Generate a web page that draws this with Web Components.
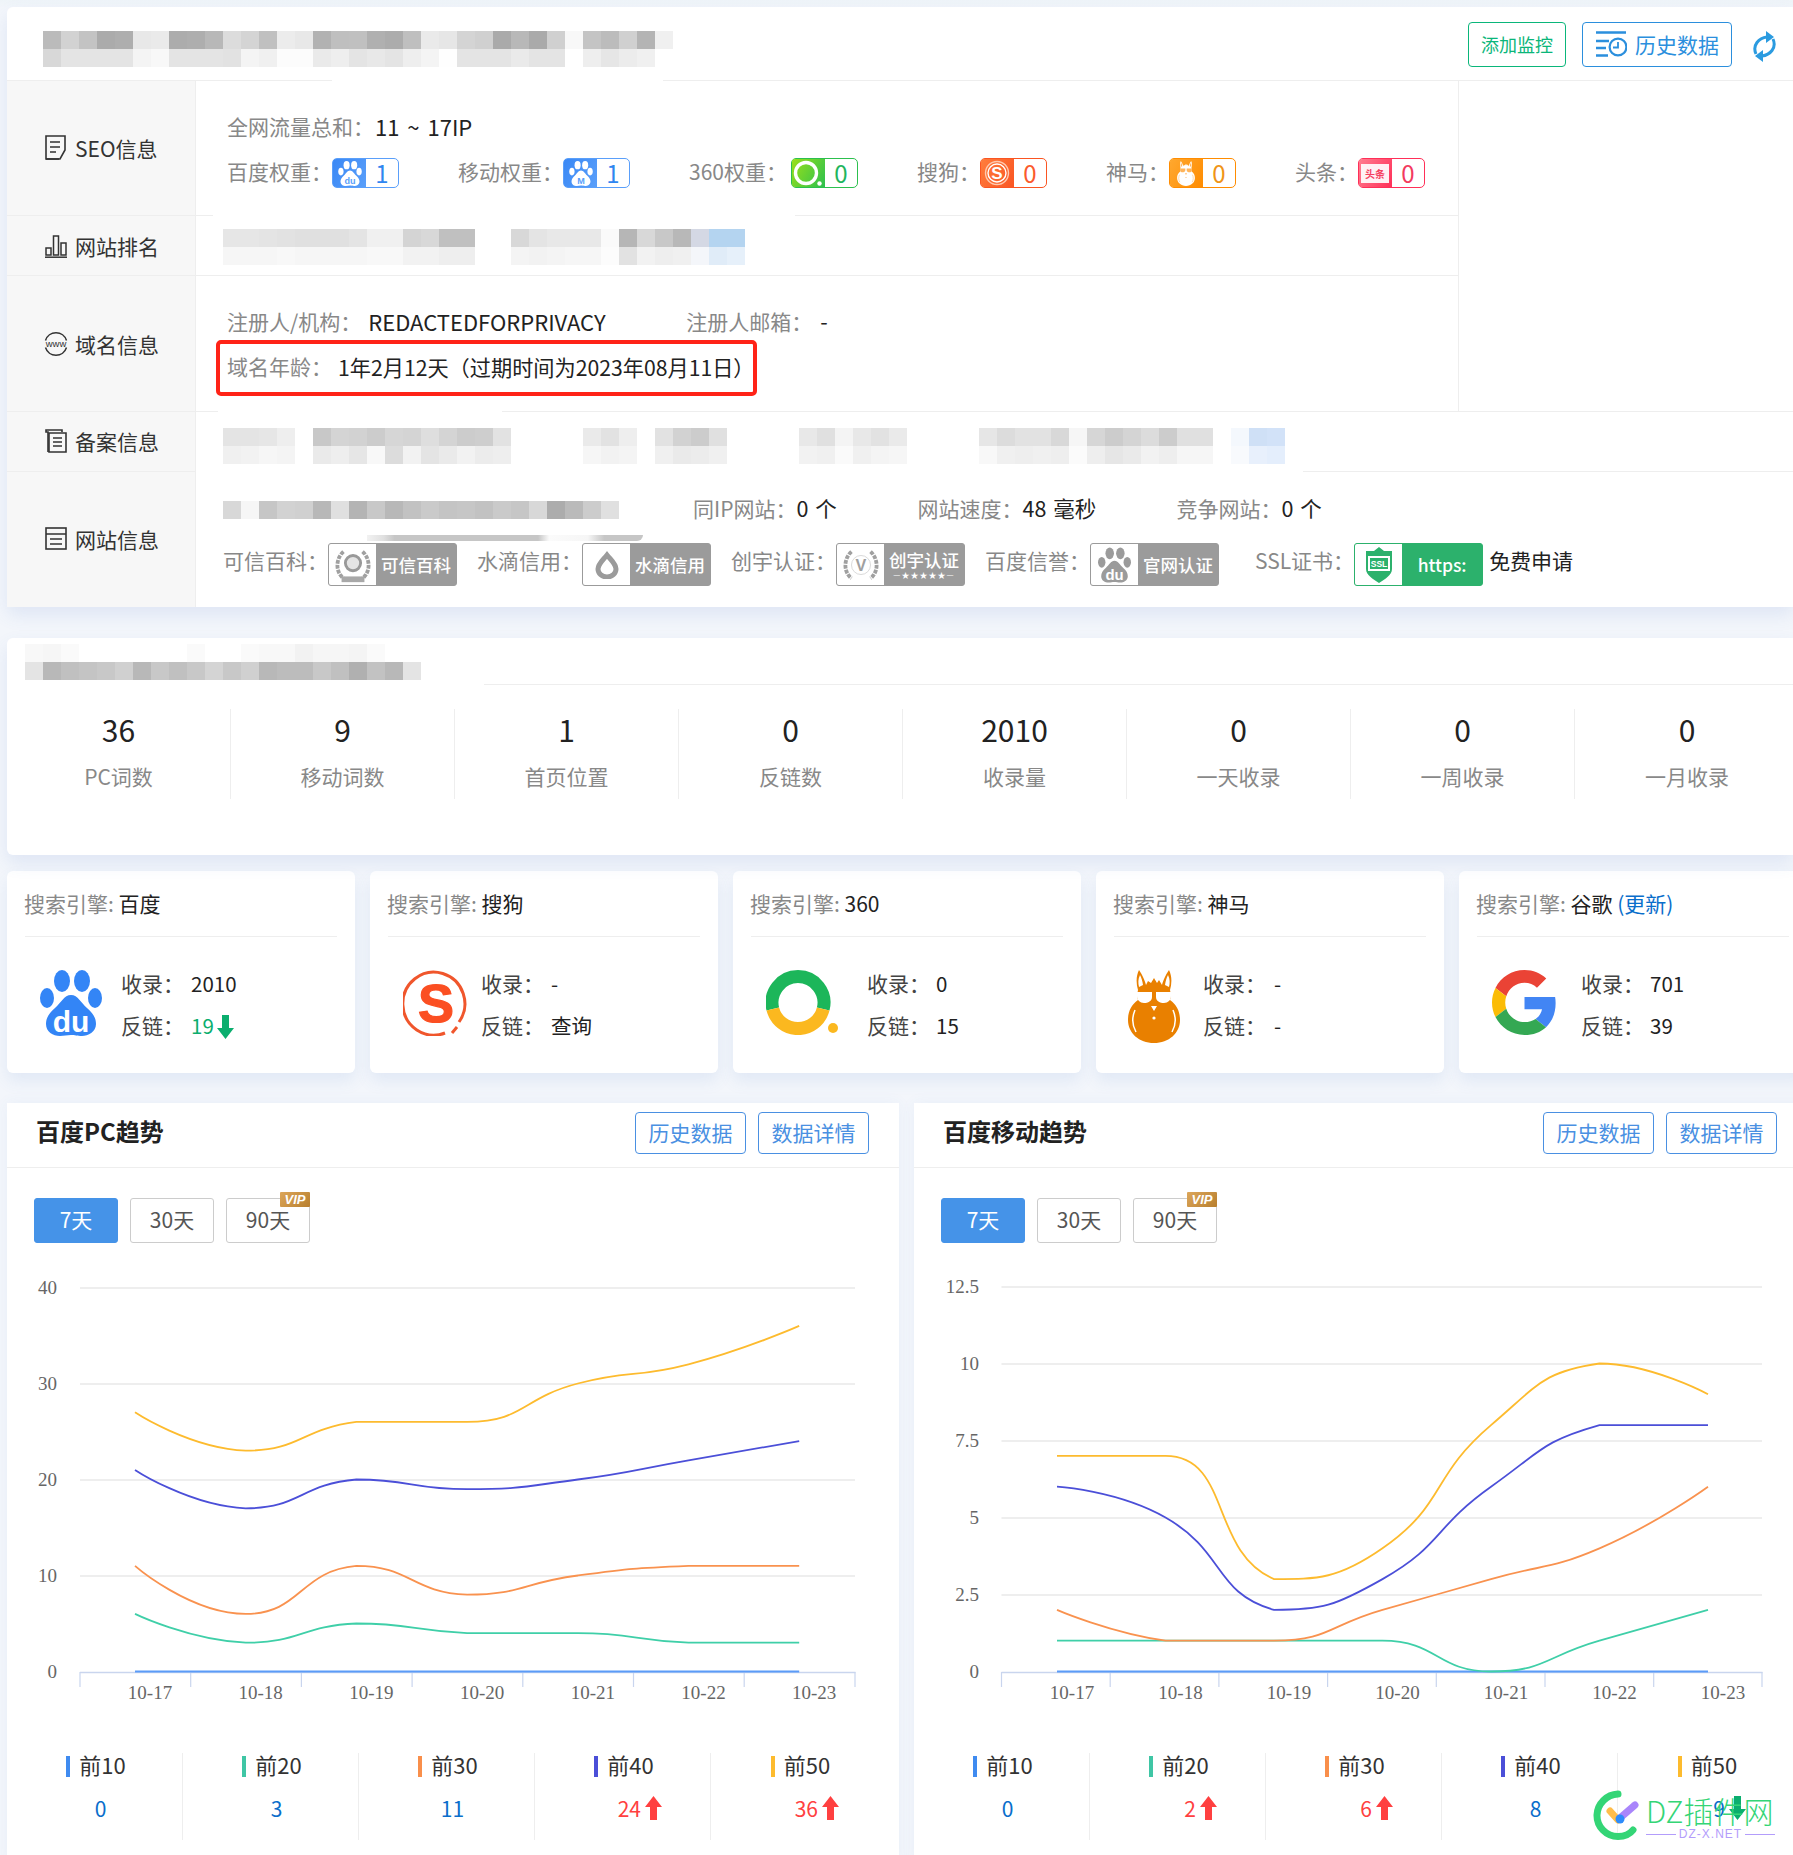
<!DOCTYPE html>
<html lang="zh">
<head>
<meta charset="utf-8">
<title>SEO</title>
<style>
  html, body { margin: 0; height: 1855px; overflow: hidden; }
  body {
    background: linear-gradient(#eef4f8 0, #f3f6fb 8px);
    font-family: "Noto Sans CJK SC", "Noto Sans", sans-serif;
    font-size: 21px;
    color: #222;
  }
  .page { width: 1793px; height: 1855px; padding: 7px 0 0 7px; box-sizing: border-box; overflow: hidden; position: relative; }
  .card { display: block; width: 1786px; background: #fff; border-radius: 6px 0 0 6px; box-shadow: 0 8px 18px rgba(70, 115, 200, .12); position: relative; }
  .card-head { display: flex; justify-content: space-between; align-items: flex-start; height: 74px; padding: 15px 16px 0 36px; box-sizing: border-box; border-bottom: 1px solid #eee; }
  .head-btns { display: flex; align-items: flex-start; gap: 16px; }
  .top-rows { width: 1451px; border-right: 1px solid #eee; border-bottom: 0; }
  .rows-line { border-bottom: 1px solid #eee; }
  .lbl { color: #888; }
  .line { display: flex; align-items: center; height: 30px; white-space: nowrap; }
  .line > .lbl, .line > .val { padding-bottom: 3px; }
  .domain-content .line > .lbl, .domain-content .line > .val, .site-content .line > .lbl, .site-content .line > .val { padding-bottom: 5px; }
  .val { color: #222; font-size: 21.5px; word-spacing: 2px; }
  .seo-content { display: flex; flex-direction: column; gap: 16px; padding: 31px 0 0 31px; }
  .seo-item { display: flex; align-items: center; margin-right: 59px; }
  .seo-item .lbl { padding-bottom: 4px; }
  .domain-content { display: flex; flex-direction: column; gap: 2px; padding: 32px 0 0 31px; }
  .red-box { display: flex; align-items: center; box-sizing: border-box; width: 541px; height: 56px; margin-left: -11px; padding: 0 0 4px 7px; border: 4px solid #ff2317; border-radius: 5px; white-space: nowrap; }
  .site-content { display: flex; flex-direction: column; gap: 18px; padding: 23px 0 0 27px; }
  .cert-line { display: flex; align-items: center; height: 43px; white-space: nowrap; }
  .cert-item { display: flex; align-items: center; margin-right: 20px; }
  .cert-item .lbl, .cert-line > .val { padding-bottom: 9px; }
  .gap { position: absolute; height: 2px; background: #fff; }
  .sliver { position: absolute; left: 360px; top: 528px; width: 276px; height: 6px; border-radius: 0 0 8px 0; background: linear-gradient(90deg, #f2f2f2 0, #e0e0e0 6%, #c6c6c6 10%, #c6c6c6 62%, #fbfbfb 66%, #f6f6f6 80%, #c6c6c6 86%, #c6c6c6 100%); }
  .stats { display: grid; grid-template-columns: repeat(8, 224px); padding: 24px 0 56px; overflow: hidden; }
  .card2-head { height: 47px; padding: 6px 0 0 18px; box-sizing: border-box; border-bottom: 1px solid #eee; }
  .engines { display: flex; gap: 15px; margin-top: 16px; width: 1830px; }
  .panels { display: flex; gap: 15px; margin-top: 30px; width: 1830px; height: 760px; }
  .rank-mosaic { padding: 13px 0 0 27px; }
  .beian-mosaic { padding: 16px 0 0 27px; }
</style>
</head>
<body>
<div class="page">
  <div class="card">
    <div class="card-head">
      <x-mosaic style="margin-top:9px" rows="bb d2 c3 ab ae e8 ea ac ae b8 dc d4 c0 ec e8 b2 bf c0 b0 ac bf ea e6 d4 d0 aa b8 aa d0 f8 c4 bc d0 b4 f0/d8 e4 e4 e4 e4 f4 f8 e4 e4 e4 e2 f4 f0 fc fc ea ee e4 e8 e4 ee f4 fe e4 e4 e4 ea e4 e4 -- ee e6 ec f0 --"></x-mosaic>
      <div class="head-btns">
        <head-button color="#0ab67a" w="98">添加监控</head-button>
        <head-button color="#2b8fdd" w="150" icon="history">历史数据</head-button>
        <app-icon name="refresh" style="margin:9px 0 0 4px"></app-icon>
      </div>
    </div>
    <div class="top-rows">
      <info-row label="SEO信息" icon="doc" h="135">
        <div class="seo-content">
          <div class="line"><span class="lbl">全网流量总和：</span><span class="val" style="margin-left:1px;font-size:22px;word-spacing:3px">11 ~ 17IP</span></div>
          <div class="line">
            <div class="seo-item"><span class="lbl">百度权重：</span><rank-badge value="1" grad="#3a88f5,#5a9ffa" num="#2f86f0" icon="pawDu"></rank-badge></div>
            <div class="seo-item"><span class="lbl">移动权重：</span><rank-badge value="1" grad="#3a88f5,#5a9ffa" num="#2f86f0" icon="pawM"></rank-badge></div>
            <div class="seo-item"><span class="lbl" style="margin-right:4px">360权重：</span><rank-badge value="0" grad="#9be01a,#2cc04e" num="#1fb55e" icon="s360"></rank-badge></div>
            <div class="seo-item"><span class="lbl">搜狗：</span><rank-badge value="0" grad="#ff7d3c,#fa5522" num="#fb5a2c" icon="sSogou"></rank-badge></div>
            <div class="seo-item"><span class="lbl">神马：</span><rank-badge value="0" grad="#ffa82f,#ff8c00" num="#f09416" icon="sShenma"></rank-badge></div>
            <div class="seo-item"><span class="lbl">头条：</span><rank-badge value="0" grad="#ff7f90,#ff2f58" num="#f33a5f" icon="sTou"></rank-badge></div>
          </div>
        </div>
      </info-row>
      <info-row label="网站排名" icon="bars" h="60">
        <div class="rank-mosaic">
          <x-mosaic rows="e6 e6 e4 e2 e0 e0 e0 e4 f0 f0 d4 d8 c0 c0 -- -- d8 e4 e8 e8 e8 fa b6 d8 c8 b8 d4d8e4 b4d4f0 b4d4f0/f6 f6 f6 f8 f6 f6 f6 f6 f8 f8 f2 f2 ee ee -- -- f4 f2 f4 f6 f6 fc e2 f2 ee f0 f4f6fa e0ecf8 e6f0fa"></x-mosaic>
        </div>
      </info-row>
      <info-row label="域名信息" icon="www" h="135" noline>
        <div class="domain-content">
          <div class="line">
            <span class="lbl">注册人/机构：</span><span class="val" style="margin-left:7px;width:318px;font-size:22px">REDACTEDFORPRIVACY</span>
            <span class="lbl">注册人邮箱：</span><span class="val" style="margin-left:8px">-</span>
          </div>
          <div class="red-box"><span class="lbl">域名年龄：</span><span class="val" style="margin-left:6px;font-size:21.2px">1年2月12天（过期时间为2023年08月11日）</span></div>
        </div>
      </info-row>
    </div>
    <div class="rows-line"></div>
    <info-row label="备案信息" icon="files" h="60" style="--side-pb:2px">
      <div class="beian-mosaic">
        <x-mosaic rows="e4 e4 e6 ee -- c8 d4 d2 cc d6 d4 de d4 cc ce e2 -- -- -- -- ea e2 ee -- e2 d2 cc e0 -- -- -- -- e8 e0 f4 e8 e2 ea -- -- -- -- e6 dc e2 e2 d8 f6 d6 cc d4 dc cc e0 e0 -- f4f8fd cfe0f6 d2e2f8/f0 f2 f6 f4 -- ea ee e6 f8 dc f2 e4 ea f2 ec ee -- -- -- -- f6 f2 f4 -- f0 ea ec f0 -- -- -- -- f2 f0 fa f0 f4 f6 -- -- -- -- f8 f0 ee f0 ee fb ee e6 ea f2 ee f6 f6 -- f8fafd e8f0fc e4eefc"></x-mosaic>
      </div>
    </info-row>
    <info-row label="网站信息" icon="sheet" h="135" noline style="--side-pb:2px">
      <div class="site-content">
        <div class="line">
          <x-mosaic rows="d8 f6 c6 d2 d0 b8 e0 b4 c8 b8 c2 ca c4 c6 c2 ca c6 d8 ac ba cc e0"></x-mosaic>
          <span class="lbl" style="margin-left:74px">同IP网站：</span><span class="val" style="width:121px">0 个</span>
          <span class="lbl">网站速度：</span><span class="val" style="width:154px">48 毫秒</span>
          <span class="lbl">竞争网站：</span><span class="val">0 个</span>
        </div>
        <div class="cert-line">
          <div class="cert-item"><span class="lbl">可信百科：</span><cert-badge icon="wreath">可信百科</cert-badge></div>
          <div class="cert-item"><span class="lbl">水滴信用：</span><cert-badge icon="drop">水滴信用</cert-badge></div>
          <div class="cert-item"><span class="lbl">创宇认证：</span><cert-badge icon="wreathV" stars>创宇认证</cert-badge></div>
          <div class="cert-item" style="margin-right:36px"><span class="lbl">百度信誉：</span><cert-badge icon="pawGrey">官网认证</cert-badge></div>
          <div class="cert-item" style="margin-right:0"><span class="lbl">SSL证书：</span><cert-badge icon="shield" green>https:</cert-badge></div>
          <span class="val" style="margin-left:6px;font-size:21px">免费申请</span>
        </div>
      </div>
    </info-row>
    <span class="gap" style="left:325px;top:73px;width:331px"></span>
    <span class="gap" style="left:206px;top:208px;width:582px"></span>
    <span class="gap" style="left:211px;top:403px;width:284px"></span>
    <span class="gap" style="left:189px;top:463px;width:1107px"></span>
    <span class="sliver"></span>
  </div>

  <div class="card" style="margin-top:31px">
    <div class="card2-head">
      <x-mosaic rows="f8 f6 fa -- -- -- -- -- -- fa -- -- fa f8 f8 f2 f6 f6 f4 fa -- --/e4 b8 c0 c4 c8 d0 b8 c8 c0 c8 d4 c8 d0 b8 bc bc c8 c0 b0 c2 b8 e4"></x-mosaic>
    </div>
    <span class="gap" style="left:0;top:46px;width:477px"></span>
    <div class="stats">
      <stat-item value="36" label="PC词数"></stat-item>
      <stat-item value="9" label="移动词数"></stat-item>
      <stat-item value="1" label="首页位置"></stat-item>
      <stat-item value="0" label="反链数"></stat-item>
      <stat-item value="2010" label="收录量"></stat-item>
      <stat-item value="0" label="一天收录"></stat-item>
      <stat-item value="0" label="一周收录"></stat-item>
      <stat-item value="0" label="一月收录"></stat-item>
    </div>
  </div>

  <div class="engines">
    <engine-card name="百度" icon="baidu" ix="33" tx="114" vx="184" included="2010" links="19" trend="down"></engine-card>
    <engine-card name="搜狗" icon="sogou" ix="33" tx="111" vx="181" included="-" links="查询"></engine-card>
    <engine-card name="360" icon="q360" ix="33" tx="134" vx="203" included="0" links="15"></engine-card>
    <engine-card name="神马" icon="shenma" ix="32" tx="107" vx="178" included="-" links="-"></engine-card>
    <engine-card name="谷歌" icon="google" ix="33" tx="122" vx="191" included="701" links="39" more="(更新)"></engine-card>
  </div>

  <div class="panels">
    <trend-panel heading="百度PC趋势" tick0="73" tickstep="110.7" pt0="128" ptstep="110.7" unit="9.6" ystep="96" ylabels="40,30,20,10" ylabelx="50" legend="0,3,11,24u,36u"
      series="0,0,0,0,0,0,0|6,3,5,4,4,3,3|11,6,11,8,10,11,11|21,17,20,19,20,22,24|27,23,26,26,30,32,36"></trend-panel>
    <trend-panel style="width:893px" heading="百度移动趋势" tick0="87.5" tickstep="108.7" pt0="143" ptstep="108.5" unit="30.8" ystep="77" ylabels="12.5,10,7.5,5,2.5" ylabelx="65" legend="0,2u,6u,8,9d"
      series="0,0,0,0,0,0,0|1,1,1,1,0,1,2|2,1,1,2,3,4,6|6,5,2,3,6,8,8|7,7,3,4,8,10,9"></trend-panel>
  </div>

  <dz-watermark></dz-watermark>
</div>

<script>
const paw = (fill, txt, txtFill, size) => `
  <ellipse cx="22" cy="11" rx="8" ry="11" fill="${fill}"/><ellipse cx="42" cy="11" rx="8" ry="11" fill="${fill}"/>
  <ellipse cx="7" cy="28" rx="7" ry="10" fill="${fill}"/><ellipse cx="55" cy="28" rx="7" ry="10" fill="${fill}"/>
  <path fill="${fill}" d="M31 25C38 25 41 33 47 38C53 43 56 48 56 54C56 62 48 66 42 66C37 66 35 65 31 65C27 65 24 66 20 66C13 66 6 62 6 54C6 48 9 43 15 38C21 33 24 25 31 25Z"/>
  <text x="31" y="${size > 24 ? 62 : 60}" text-anchor="middle" font-family="Liberation Sans" font-weight="700" font-size="${size}" fill="${txtFill}">${txt}</text>`;

const llama = (fill, eye) => `
  <path fill="${fill}" d="M11 0C8 6 8 13 10 20C9 24 9 27 10 30C3 35 0 42 0 50C0 63 11 73 26 73C41 73 52 63 52 50C52 42 49 35 42 30C43 27 43 24 42 20C44 13 44 6 41 0C38 4 35 11 34 15L31 10L29 13L26 8L23 13L20 11L18 15C17 11 14 4 11 0Z"/>
  <path fill="${eye}" d="M12 5C10 9 10 13 11 17L15 15C14.5 11 13.5 8 12 5ZM40 5C42 9 42 13 41 17L37 15C37.5 11 38.5 8 40 5Z"/>
  <path fill="${eye}" d="M9 22H24V27C24 31 20 33 16 33C12 33 9 30 9 26ZM28 22H43V26C43 30 40 33 36 33C32 33 28 31 28 27Z"/>
  <path fill="none" stroke="${eye}" stroke-width="1.5" d="M7 40C4 47 4 55 8 62M45 40C48 47 48 55 44 62"/>
  <circle cx="26" cy="48" r="1.6" fill="${eye}"/><path fill="${eye}" d="M23 36H29L26 41Z"/>`;

const wreath = (inner) => `
  <g fill="none" stroke="#a0a0a0" stroke-width="4" stroke-dasharray="4 1.2">
    <path d="M10 7C2 14 1 28 10 35"/><path d="M30 7C38 14 39 28 30 35"/>
  </g>
  ${inner}`;

const ICONS = {
  doc: `<svg width="21" height="26" viewBox="0 0 21 26" fill="none" stroke="#333" stroke-width="1.6"><path d="M1 1H20V15L15 24H1Z"/><path d="M5 7H15M5 12H15M5 17H11"/><path d="M1 24H14"/></svg>`,
  bars: `<svg width="22" height="24" viewBox="0 0 22 24" fill="none" stroke="#333" stroke-width="1.5"><path d="M1 14H6V21H1ZM8.5 2H13.5V21H8.5ZM16 9H21V21H16Z"/><path d="M0 23.2H22"/></svg>`,
  www: `<svg width="24" height="24" viewBox="0 0 24 24"><path fill="none" stroke="#333" stroke-width="1.5" d="M1.5 8.5A11 11 0 0 1 22.5 8.5M1.5 15.5A11 11 0 0 0 22.5 15.5"/><text x="12" y="15" text-anchor="middle" font-family="Liberation Sans" font-size="9.5" fill="#333">www</text></svg>`,
  files: `<svg width="22" height="24" viewBox="0 0 22 24" fill="none" stroke="#333" stroke-width="1.6"><path d="M3 23V3H1V1H17V3"/><path d="M4 4H21V23H4Z"/><path d="M8 9H17M8 13H17M8 17H17"/></svg>`,
  sheet: `<svg width="22" height="23" viewBox="0 0 22 23" fill="none" stroke="#333" stroke-width="1.6"><rect x="1" y="1" width="20" height="21"/><path d="M1 7H21M5 12H17M5 17H17"/></svg>`,
  refresh: `<svg width="25" height="31" viewBox="0 0 25 31" fill="none" stroke="#2b9be0" stroke-width="3"><path d="M15 6C7 7 0 14 4 23"/><path d="M10 25C18 24 25 17 21 8"/><path fill="#2b9be0" stroke="none" d="M14 0L22 6L14 12ZM11 19L3 25L11 31Z"/></svg>`,
  history: `<svg width="32" height="26" viewBox="0 0 32 26" fill="none" stroke="#2b8fdd"><path stroke-width="2.6" d="M1 1.5H31M1 10H14M1 17H11M1 24.5H13"/><circle cx="23" cy="16" r="8.4" stroke-width="2.2"/><path stroke-width="1.8" d="M23 11V16.5H18"/></svg>`,
  pawDu: `<svg width="24" height="25" viewBox="0 0 62 66">${paw('#fff', 'du', '#5a9ffa', 24)}</svg>`,
  pawM: `<svg width="24" height="25" viewBox="0 0 62 66">${paw('#fff', 'M', '#5a9ffa', 24)}</svg>`,
  s360: `<svg width="30" height="27" viewBox="0 0 30 27"><circle cx="13" cy="13" r="10.5" fill="none" stroke="#fff" stroke-width="3.4"/><circle cx="26.5" cy="23.5" r="2.2" fill="#fff"/></svg>`,
  sSogou: `<svg width="26" height="26" viewBox="0 0 26 26"><circle cx="13" cy="13" r="11.5" fill="none" stroke="#ffc9ae" stroke-width="1.4"/><circle cx="13" cy="13" r="9" fill="none" stroke="#fff" stroke-width="1.4"/><text x="13" y="19" text-anchor="middle" font-family="Liberation Sans" font-weight="700" font-size="17" fill="#fff">S</text></svg>`,
  sShenma: `<svg width="18" height="25" viewBox="0 0 52 73">${llama('#fff', '#ffb45a')}</svg>`,
  sTou: `<svg width="28" height="19" viewBox="0 0 28 19"><rect width="28" height="19" fill="#fff" opacity=".92"/><text x="14" y="14" text-anchor="middle" font-family="Noto Sans CJK SC" font-weight="700" font-size="10" fill="#f5405f">头条</text></svg>`,
  baidu: `<svg width="62" height="66" viewBox="0 0 62 66">${paw('#3385f6', 'du', '#fff', 30)}</svg>`,
  sogou: `<svg width="65" height="66" viewBox="0 0 65 66"><path fill="none" stroke="#f0562c" stroke-width="3" d="M56 52A31 31.5 0 1 0 42 63"/><path fill="none" stroke="#f0562c" stroke-width="3" d="M49 63L54 57"/><text x="33" y="52" text-anchor="middle" font-family="Liberation Sans" font-weight="700" font-size="54" fill="#fb4f22" stroke="#fb4f22" stroke-width="1.2">S</text></svg>`,
  q360: `<svg width="73" height="65" viewBox="0 0 73 65" fill="none" stroke-width="13"><path stroke="#1cb65a" d="M6.8 39A26 26 0 1 1 57.2 39"/><path stroke="#fbb81f" d="M57.2 39A26 26 0 0 1 6.8 39"/><circle cx="67" cy="58" r="5" fill="#fbb81f" stroke="none"/></svg>`,
  shenma: `<svg width="52" height="73" viewBox="0 0 52 73">${llama('#e98000', '#fff')}</svg>`,
  google: `<svg width="65" height="65" viewBox="0 0 48 48"><path fill="#EA4335" d="M24 9.5c3.54 0 6.71 1.22 9.21 3.6l6.85-6.85C35.9 2.38 30.47 0 24 0 14.62 0 6.51 5.38 2.56 13.22l7.98 6.19C12.43 13.72 17.74 9.5 24 9.5z"/><path fill="#4285F4" d="M46.98 24.55c0-1.57-.15-3.09-.38-4.55H24v9.02h12.94c-.58 2.96-2.26 5.48-4.78 7.18l7.73 6c4.51-4.18 7.09-10.36 7.09-17.65z"/><path fill="#FBBC05" d="M10.53 28.59c-.48-1.45-.76-2.99-.76-4.59s.27-3.14.76-4.59l-7.98-6.19C.92 16.46 0 20.12 0 24c0 3.88.92 7.54 2.56 10.78l7.97-6.19z"/><path fill="#34A853" d="M24 48c6.48 0 11.93-2.13 15.89-5.81l-7.73-6c-2.15 1.45-4.92 2.3-8.16 2.3-6.26 0-11.57-4.22-13.47-9.91l-7.98 6.19C6.51 42.62 14.62 48 24 48z"/></svg>`,
  wreath: `<svg width="40" height="40" viewBox="0 0 40 42">${wreath(`<circle cx="20" cy="19" r="8" fill="#e4e4e4" stroke="#999" stroke-width="3"/><rect x="8" y="33" width="24" height="6" fill="#a8a8a8"/>`)}</svg>`,
  wreathV: `<svg width="40" height="40" viewBox="0 0 40 42">${wreath(`<circle cx="20" cy="21" r="10" fill="none" stroke="#d8d8d8" stroke-width="1"/><text x="20" y="27" text-anchor="middle" font-family="Liberation Sans" font-weight="700" font-size="17" fill="#a0a0a0">V</text>`)}</svg>`,
  drop: `<svg width="24" height="28" viewBox="0 0 24 28"><path fill="none" stroke="#9b9b9b" stroke-width="5" d="M12 4C8 9 3 13 3 18A9 8 0 0 0 21 18C21 13 16 9 12 4Z"/></svg>`,
  pawGrey: `<svg width="33" height="36" viewBox="0 0 62 66">${paw('#9b9b9b', 'du', '#fff', 28)}</svg>`,
  shield: `<svg width="32" height="36" viewBox="0 0 32 36"><path fill="#2cb16c" d="M16 0L21 4H29V22C29 28 22 32 16 36C10 32 3 28 3 22V4H11Z"/><rect x="5" y="9" width="22" height="15" fill="#fff"/><rect x="7" y="11" width="18" height="11" fill="#2cb16c"/><text x="16" y="20" text-anchor="middle" font-family="Liberation Sans Narrow,Liberation Sans" font-weight="700" font-size="8.5" fill="#fff">SSL</text></svg>`,
  arrowUp: `<svg width="17" height="24" viewBox="0 0 17 24"><path fill="#ff4040" d="M8.5 0L17 11H12V24H5V11H0Z"/></svg>`,
  arrowDown: `<svg width="17" height="24" viewBox="0 0 17 24"><path fill="#0bae6e" d="M8.5 24L17 13H12V0H5V13H0Z"/></svg>`
};

class AppIcon extends HTMLElement {
  connectedCallback() {
    if (this.shadowRoot) return;
    const root = this.attachShadow({mode: "open"});
    root.innerHTML = `<style>:host{display:inline-flex;flex:none;line-height:0}</style>${ICONS[this.getAttribute("name")]}`;
  }
}

class XMosaic extends HTMLElement {
  connectedCallback() {
    if (this.shadowRoot) return;
    const root = this.attachShadow({mode: "open"});
    const rows = this.getAttribute("rows").split("/").map(r => r.trim().split(/\s+/));
    const cell = c => {
      if (c === "--") return "<i></i>";
      const col = c.length === 2 ? "#" + c + c + c : "#" + c;
      return `<i style="background:${col}"></i>`;
    };
    root.innerHTML = `
      <style>
        :host { display: block; width: fit-content; flex: none; }
        .r { display: flex; height: 18px; }
        i { display: block; width: 18px; height: 18px; }
      </style>
      ${rows.map(r => `<div class="r">${r.map(cell).join("")}</div>`).join("")}`;
  }
}

class HeadButton extends HTMLElement {
  connectedCallback() {
    if (this.shadowRoot) return;
    const root = this.attachShadow({mode: "open"});
    const color = this.getAttribute("color");
    const icon = this.getAttribute("icon");
    root.innerHTML = `
      <style>
        :host { display: flex; align-items: center; justify-content: center; gap: 8px; box-sizing: border-box; height: 45px; width: ${this.getAttribute("w")}px; padding-bottom: 2px; border: 1.5px solid ${color}; border-radius: 4px; color: ${color}; font-size: ${icon ? 21 : 18}px; }
      </style>
      ${icon ? `<app-icon name="${icon}"></app-icon>` : ""}<slot></slot>`;
  }
}

class InfoRow extends HTMLElement {
  connectedCallback() {
    if (this.shadowRoot) return;
    const root = this.attachShadow({mode: "open"});
    root.innerHTML = `
      <style>
        :host { display: flex; box-sizing: border-box; height: ${this.getAttribute("h")}px; ${this.hasAttribute("noline") ? "" : "border-bottom: 1px solid #eee;"} }
        .side { display: flex; align-items: center; gap: 9px; box-sizing: border-box; flex: none; width: 189px; padding: 0 0 var(--side-pb, 0) 38px; background: #f7f7f7; border-right: 1px solid #eee; color: #333; font-size: 21px; }
        .body { flex: 1; min-width: 0; }
        .ic { display: flex; width: 21px; justify-content: center; }
      </style>
      <div class="side"><span class="ic"><app-icon name="${this.getAttribute("icon")}"></app-icon></span>${this.getAttribute("label")}</div>
      <div class="body"><slot></slot></div>`;
  }
}

class RankBadge extends HTMLElement {
  connectedCallback() {
    if (this.shadowRoot) return;
    const root = this.attachShadow({mode: "open"});
    const [a, b] = this.getAttribute("grad").split(",");
    const num = this.getAttribute("num");
    root.innerHTML = `
      <style>
        :host { display: flex; box-sizing: border-box; width: 67px; height: 30px; border: 1.5px solid ${b}; border-radius: 5px; flex: none; }
        .ic { display: flex; align-items: center; justify-content: center; width: 33px; border-radius: 3px 0 0 3px; background: linear-gradient(120deg, ${a}, ${b}); }
        .n { flex: 1; display: flex; align-items: center; justify-content: center; color: ${num}; font-size: 24px; line-height: 26px; }
      </style>
      <div class="ic"><app-icon name="${this.getAttribute("icon")}"></app-icon></div>
      <div class="n">${this.getAttribute("value")}</div>`;
  }
}

class CertBadge extends HTMLElement {
  connectedCallback() {
    if (this.shadowRoot) return;
    const root = this.attachShadow({mode: "open"});
    const col = this.hasAttribute("green") ? "#2cb16c" : "#9b9b9b";
    const stars = this.hasAttribute("stars");
    root.innerHTML = `
      <style>
        :host { display: flex; box-sizing: border-box; width: 129px; height: 43px; border: 1.5px solid ${col}; border-radius: 3px; overflow: hidden; flex: none; background: ${col}; }
        .ic { display: flex; align-items: center; justify-content: center; width: 47px; background: #fff; flex: none; }
        .t { flex: 1; display: flex; flex-direction: column; align-items: center; justify-content: center; color: #fff; font-size: 17.5px; font-weight: 500; line-height: 20px; }
        .s { font-size: 8px; line-height: 10px; letter-spacing: 1px; font-weight: 400; }
      </style>
      <div class="ic"><app-icon name="${this.getAttribute("icon")}"></app-icon></div>
      <div class="t"><slot></slot>${stars ? `<span class="s">—★★★★★—</span>` : ""}</div>`;
  }
}

class StatItem extends HTMLElement {
  connectedCallback() {
    if (this.shadowRoot) return;
    const root = this.attachShadow({mode: "open"});
    root.innerHTML = `
      <style>
        :host { display: flex; flex-direction: column; align-items: center; height: 90px; border-right: 1px solid #eee; }
        :host(:last-child) { border-right: 0; }
        .v { font-size: 30px; line-height: 40px; color: #222; }
        .l { font-size: 21px; line-height: 44px; margin-top: 5px; color: #888; }
      </style>
      <div class="v">${this.getAttribute("value")}</div>
      <div class="l">${this.getAttribute("label")}</div>`;
  }
}

class EngineCard extends HTMLElement {
  connectedCallback() {
    if (this.shadowRoot) return;
    const root = this.attachShadow({mode: "open"});
    const ix = +this.getAttribute("ix"), tx = +this.getAttribute("tx"), vx = +this.getAttribute("vx");
    const more = this.getAttribute("more");
    const trend = this.getAttribute("trend");
    root.innerHTML = `
      <style>
        :host { display: block; box-sizing: border-box; flex: none; width: 348px; height: 202px; padding: 19px 18px 0; background: #fff; border-radius: 6px; box-shadow: 0 8px 16px rgba(70, 115, 200, .1); }
        .title { line-height: 26px; padding-bottom: 20px; border-bottom: 1px solid #eee; color: #222; white-space: nowrap; font-size: 21px; }
        .title b { font-weight: 400; color: #888; margin-left: -1px; }
        .title a { color: #0a6ecb; }
        .body { display: flex; padding: 33px 0 0 ${ix - 18}px; }
        .ic { flex: none; width: ${tx - ix}px; }
        .rows { display: flex; flex-direction: column; gap: 12px; }
        .row { display: flex; align-items: center; height: 30px; color: #222; font-size: 20.5px; }
        .row span { padding-bottom: 4px; }
        .k { width: ${vx - tx}px; color: #444; font-size: 21px; }
        .green { color: #0bae6e; }
      </style>
      <div class="title"><b>搜索引擎:</b> ${this.getAttribute("name")}${more ? ` <a>${more}</a>` : ""}</div>
      <div class="body">
        <div class="ic"><app-icon name="${this.getAttribute("icon")}"></app-icon></div>
        <div class="rows">
          <div class="row"><span class="k">收录：</span><span>${this.getAttribute("included")}</span></div>
          <div class="row"><span class="k">反链：</span><span class="${trend ? "green" : ""}">${this.getAttribute("links")}</span>${trend ? `<app-icon name="arrowDown" style="margin-left:3px"></app-icon>` : ""}</div>
        </div>
      </div>`;
  }
}

class TrendChart extends HTMLElement {
  // same control points as a smoothed echarts line
  static smooth(pts) {
    const s = 0.5;
    const clamp = (v, a, b) => Math.max(Math.min(a, b), Math.min(Math.max(a, b), v));
    let d = `M${pts[0][0]} ${pts[0][1]}`;
    let cp0 = pts[0];
    for (let i = 0; i < pts.length - 1; i++) {
      const [x, y] = pts[i], [nx, ny] = pts[i + 1];
      const nn = pts[i + 2] || pts[i + 1];
      let cp1;
      if (i + 2 < pts.length) {
        const lenA = Math.hypot(nx - x, ny - y), lenB = Math.hypot(nn[0] - nx, nn[1] - ny);
        const r = lenA / (lenA + lenB);
        const vx = (nn[0] - x) * s, vy = (nn[1] - y) * s;
        cp1 = [clamp(nx - vx * r, x, nx), clamp(ny - vy * r, y, ny)];
        const ax = nx - cp1[0], ay = ny - cp1[1];
        d += `C${cp0[0]} ${cp0[1]} ${cp1[0]} ${cp1[1]} ${nx} ${ny}`;
        const k = lenB / lenA;
        cp0 = [clamp(nx + ax * k, nx, nn[0]), clamp(ny + ay * k, ny, nn[1])];
      } else {
        d += `C${cp0[0]} ${cp0[1]} ${nx} ${ny} ${nx} ${ny}`;
      }
    }
    return d;
  }
  connectedCallback() {
    if (this.shadowRoot) return;
    const root = this.attachShadow({mode: "open"});
    const base = 421;
    const a = n => +this.getAttribute(n);
    const unit = a("unit"), tick0 = a("tick0"), tickstep = a("tickstep"), pt0 = a("pt0"), ptstep = a("ptstep"), lx = a("ylabelx"), ystep = a("ystep");
    const colors = ["#5b9bf8", "#3fcfa8", "#f9924f", "#4b4fd8", "#fdbb2e"];
    const series = this.getAttribute("series").split("|").map(s => s.split(",").map(Number));
    const ylabels = this.getAttribute("ylabels").split(",");
    const days = ["10-17", "10-18", "10-19", "10-20", "10-21", "10-22", "10-23"];
    let out = "";
    ylabels.forEach((l, i) => {
      const y = base - (ylabels.length - i) * ystep;
      out += `<path d="M${tick0} ${y}H848" stroke="#e8e8e8" stroke-width="1.5"/><text x="${lx}" y="${y + 6}" text-anchor="end">${l}</text>`;
    });
    out += `<text x="${lx}" y="${base + 6}" text-anchor="end">0</text>`;
    out += `<path d="M${tick0} ${base + .5}H848.5" stroke="#c9d5ee" stroke-width="1.5" fill="none"/>`;
    for (let i = 0; i < 8; i++) {
      const x = i === 7 ? 848 : tick0 + i * tickstep;
      out += `<path d="M${x} ${base}V${base + 15}" stroke="#c9d5ee" stroke-width="1.2"/>`;
    }
    days.forEach((d, i) => {
      out += `<text x="${pt0 + i * ptstep + 15}" y="${base + 27}" text-anchor="middle">${d}</text>`;
    });
    series.forEach((s, j) => {
      const pts = s.map((v, i) => [+(pt0 + i * ptstep).toFixed(1), +(base - .5 - v * unit).toFixed(1)]);
      out += `<path d="${TrendChart.smooth(pts)}" fill="none" stroke="${colors[j]}" stroke-width="1.8"/>`;
    });
    root.innerHTML = `
      <style>:host { display: block; height: 480px; } svg { display: block; } text { font-family: "Liberation Serif", serif; font-size: 19px; fill: #666; }</style>
      <svg width="892" height="480" viewBox="0 0 892 480">${out}</svg>`;
  }
}

class TrendPanel extends HTMLElement {
  connectedCallback() {
    if (this.shadowRoot) return;
    const root = this.attachShadow({mode: "open"});
    const pass = ["tick0", "tickstep", "pt0", "ptstep", "unit", "ystep", "ylabels", "ylabelx", "series"]
      .map(n => `${n}="${this.getAttribute(n)}"`).join(" ");
    const colors = ["#3f8bf0", "#3fc6a5", "#f98f4b", "#4b4fd8", "#fdbb2e"];
    const names = ["前10", "前20", "前30", "前40", "前50"];
    const vals = this.getAttribute("legend").split(",");
    const cell = (v) => {
      const num = v.replace(/[ud]$/, "");
      const dir = v.slice(-1);
      if (dir === "u") return `<div class="val arrow red">${num}<app-icon name="arrowUp"></app-icon></div>`;
      if (dir === "d") return `<div class="val arrow blue">${num}<app-icon name="arrowDown"></app-icon></div>`;
      return `<div class="val blue">${num}</div>`;
    };
    root.innerHTML = `
      <style>
        :host { display: block; flex: none; width: 892px; height: 100%; background: #fff; box-shadow: 0 0 14px rgba(70, 115, 200, .06); }
        .head { display: flex; justify-content: space-between; box-sizing: border-box; height: 65px; padding: 9px 30px 0; border-bottom: 1px solid #eee; }
        h2 { margin: 0 0 0 -1px; font-size: 24px; line-height: 38px; font-weight: 700; color: #222; }
        .btns { display: flex; gap: 12px; }
        .btn { display: flex; align-items: center; justify-content: center; box-sizing: border-box; width: 111px; height: 42px; padding-bottom: 2px; border: 1.5px solid #4a90e2; border-radius: 4px; color: #4a90e2; font-size: 21px; }
        .tabs { display: flex; gap: 12px; padding: 30px 0 0 27px; }
        .tab { position: relative; display: flex; align-items: center; justify-content: center; box-sizing: border-box; width: 84px; height: 45px; padding-bottom: 4px; border: 1px solid #ccc; border-radius: 3px; color: #555; font-size: 21px; }
        .tab.on { background: #4593e8; border-color: #4593e8; color: #fff; }
        .vip { position: absolute; right: -1px; top: -7px; width: 30px; height: 15px; border-radius: 1px; background: linear-gradient(135deg, #dca65a, #b87f2e); color: #fff; font: italic 700 13px/15px "Liberation Sans", sans-serif; text-align: center; }
        trend-chart { margin-top: 8px; }
        .legend { display: grid; grid-template-columns: repeat(5, 176px); margin-top: 22px; }
        .cell { display: flex; flex-direction: column; align-items: stretch; height: 87px; border-right: 1px solid #eee; }
        .cell:last-child { border-right: 0; }
        .name { display: flex; align-items: center; justify-content: center; gap: 9px; height: 22px; padding-left: 3px; color: #333; font-size: 22px; }
        .name i { width: 4px; height: 21px; margin-top: 5px; }
        .val { display: flex; align-items: center; justify-content: center; height: 30px; margin-top: 18px; padding-left: 12px; font-size: 21px; }
        .val.arrow { justify-content: flex-end; padding: 0 48px 0 0; gap: 4px; }
        .blue { color: #0a6ecb; }
        .red { color: #ff4040; }
      </style>
      <div class="head">
        <h2>${this.getAttribute("heading")}</h2>
        <div class="btns"><div class="btn">历史数据</div><div class="btn">数据详情</div></div>
      </div>
      <div class="tabs">
        <div class="tab on">7天</div>
        <div class="tab">30天</div>
        <div class="tab">90天<span class="vip">VIP</span></div>
      </div>
      <trend-chart ${pass}></trend-chart>
      <div class="legend">
        ${names.map((n, i) => `<div class="cell"><div class="name"><i style="background:${colors[i]}"></i>${n}</div>${cell(vals[i])}</div>`).join("")}
      </div>`;
  }
}

class DzWatermark extends HTMLElement {
  connectedCallback() {
    if (this.shadowRoot) return;
    const root = this.attachShadow({mode: "open"});
    root.innerHTML = `
      <style>
        :host { position: absolute; left: 1593px; top: 1790px; display: flex; gap: 7px; width: 182px; height: 50px; }
        .r { display: flex; flex-direction: column; width: 129px; }
        .t { font-size: 30px; font-weight: 300; line-height: 34px; margin-top: 3px; color: #34d576; white-space: nowrap; }
        .u { display: flex; align-items: center; gap: 3px; font: 12px/14px "Liberation Sans", sans-serif; letter-spacing: 1px; color: #b39dfb; }
        .u i { flex: 1; height: 1px; background: #b39dfb; }
      </style>
      <svg width="46" height="50" viewBox="0 0 46 50" fill="none">
        <path stroke="#34d576" stroke-width="7" stroke-linecap="round" d="M25 4A22 22 0 0 0 4 25A21 21 0 0 0 25 46.5C31 46.5 37 44 40 40"/>
        <path stroke="#ffbd4a" stroke-width="7" stroke-linecap="round" d="M17 21L25 30"/>
        <path stroke="#a985fb" stroke-width="7" stroke-linecap="round" d="M27 28L42 15"/>
        <circle cx="27" cy="29" r="4.5" fill="#2d8cfb"/>
      </svg>
      <div class="r"><div class="t">DZ插件网</div><div class="u"><i></i>DZ-X.NET<i></i></div></div>`;
  }
}

customElements.define("app-icon", AppIcon);
customElements.define("x-mosaic", XMosaic);
customElements.define("head-button", HeadButton);
customElements.define("info-row", InfoRow);
customElements.define("rank-badge", RankBadge);
customElements.define("cert-badge", CertBadge);
customElements.define("stat-item", StatItem);
customElements.define("engine-card", EngineCard);
customElements.define("trend-chart", TrendChart);
customElements.define("trend-panel", TrendPanel);
customElements.define("dz-watermark", DzWatermark);
</script>
</body>
</html>
